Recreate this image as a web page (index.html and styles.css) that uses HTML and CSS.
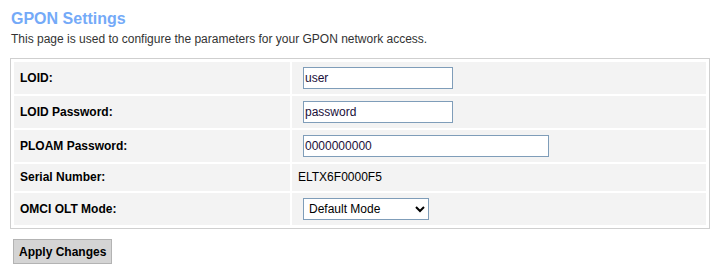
FILE: index.html
```html
<!DOCTYPE html>
<html lang="en">
<head>
    <meta charset="UTF-8">
    <title>GPON Settings</title>
    <link rel="stylesheet" href="styles.css">
</head>
<body>
    <h1 class="page-title">GPON Settings</h1>
    <p class="page-desc">This page is used to configure the parameters for your GPON network access.</p>
    <form>
        <div class="settings-box">
            <table class="settings">
                <tr>
                    <th>LOID:</th>
                    <td><input type="text" class="field" value="user"></td>
                </tr>
                <tr>
                    <th>LOID Password:</th>
                    <td><input type="text" class="field" value="password"></td>
                </tr>
                <tr>
                    <th>PLOAM Password:</th>
                    <td><input type="text" class="field wide" value="0000000000"></td>
                </tr>
                <tr>
                    <th>Serial Number:</th>
                    <td>ELTX6F0000F5</td>
                </tr>
                <tr>
                    <th>OMCI OLT Mode:</th>
                    <td>
                        <select class="field mode">
                            <option>Default Mode</option>
                            <option>Huawei Mode</option>
                            <option>ZTE Mode</option>
                            <option>Customized Mode</option>
                        </select>
                    </td>
                </tr>
            </table>
        </div>
        <button type="button" class="apply-btn">Apply Changes</button>
    </form>
</body>
</html>
```

FILE: styles.css
```css
body {
    margin: 0;
    padding: 10px;
    font-family: "Liberation Sans", Arial, sans-serif;
    font-size: 12px;
    color: #000;
    background: #fff;
}
.page-title {
    margin: 0 0 4px 1px;
    font-size: 16px;
    line-height: 18px;
    font-weight: bold;
    color: #74aaf8;
}
.page-desc {
    margin: 0 0 12px 1px;
    line-height: 14px;
    color: #333;
}
.settings-box {
    width: 696px;
    border: 1px solid #cfcfcf;
    padding: 1px;
}
.settings {
    width: 100%;
    border-spacing: 2px;
}
.settings th,
.settings td {
    background: #f3f3f3;
    padding: 5px 6px;
    line-height: 17px;
    text-align: left;
    vertical-align: middle;
}
.settings th {
    width: 40%;
    font-weight: bold;
}
.field {
    display: block;
    box-sizing: border-box;
    width: 150px;
    height: 22px;
    margin: 0 0 0 5px;
    padding: 0 1px;
    border: 1px solid #7f9db9;
    font-family: "Liberation Sans", Arial, sans-serif;
    font-size: 12px;
    color: #1a0f3a;
    background: #fff;
}
.field.wide {
    width: 246px;
}
.field.mode {
    width: 126px;
    padding: 0 1px;
    color: #000;
}
.apply-btn {
    margin: 10px 0 0 3px;
    height: 25px;
    padding: 0 5px;
    border: 1px solid #b3b3b3;
    background: #d4d4d4;
    font-family: "Liberation Sans", Arial, sans-serif;
    font-size: 12px;
    font-weight: bold;
    color: #000;
}
```
